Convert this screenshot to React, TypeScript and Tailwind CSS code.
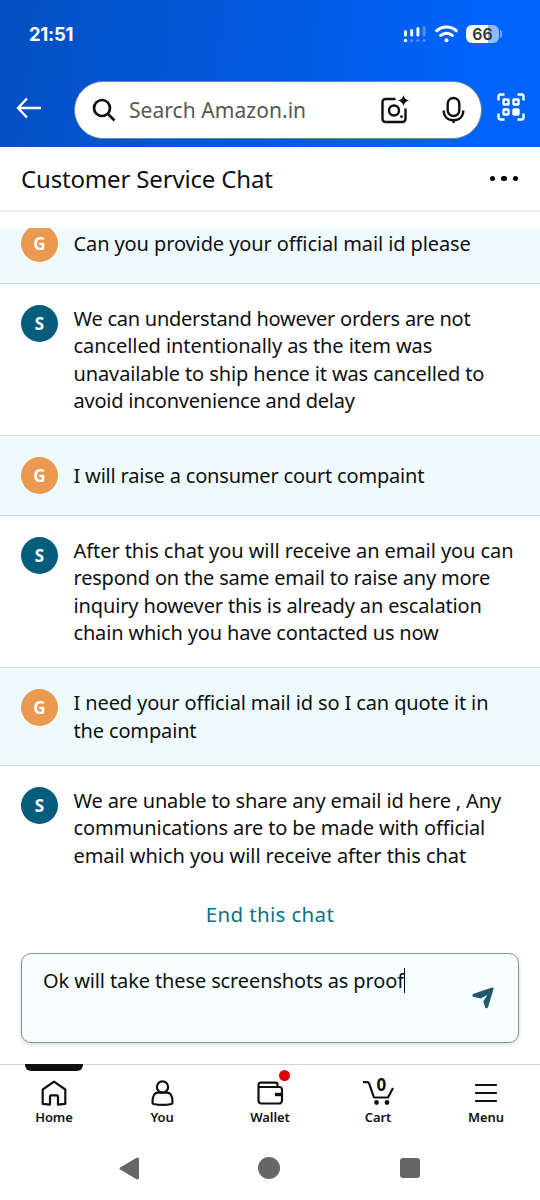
import { useState } from "react";

interface Line {
  text: string;
  tracking: string;
}

interface Message {
  from: "G" | "S";
  lines: Line[];
}

const messages: Message[] = [
  {
    from: "G",
    lines: [
      { text: "Can you provide your official mail id please", tracking: "tracking-[-0.1px]" },
    ],
  },
  {
    from: "S",
    lines: [
      { text: "We can understand however orders are not", tracking: "tracking-[-0.25px]" },
      { text: "cancelled intentionally as the item was", tracking: "tracking-[-0.07px]" },
      { text: "unavailable to ship hence it was cancelled to", tracking: "tracking-[-0.11px]" },
      { text: "avoid inconvenience and delay", tracking: "tracking-[-0.22px]" },
    ],
  },
  {
    from: "G",
    lines: [
      { text: "I will raise a consumer court compaint", tracking: "tracking-[-0.19px]" },
    ],
  },
  {
    from: "S",
    lines: [
      { text: "After this chat you will receive an email you can", tracking: "tracking-[-0.07px]" },
      { text: "respond on the same email to raise any more", tracking: "tracking-[-0.2px]" },
      { text: "inquiry however this is already an escalation", tracking: "tracking-[-0.13px]" },
      { text: "chain which you have contacted us now", tracking: "tracking-[-0.17px]" },
    ],
  },
  {
    from: "G",
    lines: [
      { text: "I need your official mail id so I can quote it in", tracking: "tracking-[-0.12px]" },
      { text: "the compaint", tracking: "tracking-[-0.15px]" },
    ],
  },
  {
    from: "S",
    lines: [
      { text: "We are unable to share any email id here , Any", tracking: "tracking-[-0.15px]" },
      { text: "communications are to be made with official", tracking: "tracking-[-0.12px]" },
      { text: "email which you will receive after this chat", tracking: "tracking-[-0.06px]" },
    ],
  },
];

function StatusBar() {
  return (
    <div className="flex h-[68px] items-center justify-between pl-[29px] pr-[38px]">
      <span className="mt-[2px] font-['Inter'] text-[18.5px] font-bold tracking-[-0.3px] text-white">
        21:51
      </span>
      <div className="flex items-center">
        <svg width="24" height="18" viewBox="0 0 24 18" fill="#fff">
          <rect x="1" y="5" width="3" height="6.5" rx="1.5" />
          <rect x="7.2" y="4" width="3" height="7.5" rx="1.5" />
          <rect x="13.4" y="2" width="3" height="9.5" rx="1.5" />
          <rect x="19.6" y="1" width="3" height="10.5" rx="1.5" opacity=".3" />
          <circle cx="2.5" cy="15.5" r="1.7" />
          <circle cx="8.7" cy="15.5" r="1.6" opacity=".3" />
          <circle cx="14.9" cy="15.5" r="1.6" opacity=".3" />
          <circle cx="21.1" cy="15.5" r="1.6" opacity=".3" />
        </svg>
        <svg className="ml-[8px]" width="23" height="18" viewBox="0 0 23 18" fill="none" stroke="#fff" strokeWidth="3" strokeLinecap="round">
          <path d="M1.8 5.7a14.3 14.3 0 0 1 19.4 0" />
          <path d="M5.7 10.4a8.6 8.6 0 0 1 11.6 0" />
          <circle cx="11.5" cy="15.2" r="2" fill="#fff" stroke="none" />
        </svg>
        <div className="ml-[8px] flex h-[18px] w-[33px] items-center justify-center rounded-[6px] bg-linear-to-r from-white from-67% to-[#8fbbff] to-67% font-['Inter'] text-[16px] font-semibold text-[#333]">
          66
        </div>
        <div className="ml-[1px] h-[8px] w-[2px] rounded-r bg-[#6ea6ff]" />
      </div>
    </div>
  );
}

function Header() {
  return (
    <header className="h-[147px] shrink-0 bg-[linear-gradient(97deg,#034fc0_0%,#0259e0_50%,#0064fc_88%)]">
      <StatusBar />
      <div className="flex items-center pt-[13px]">
        <svg className="mb-[5px] ml-[16px]" width="26" height="22" viewBox="0 0 26 22" fill="none" stroke="#fff" strokeWidth="2.4">
          <path d="M25 11H2.5M11 1.5L2 11l9 9.5" />
        </svg>
        <div className="ml-[32px] flex h-[58px] w-[408px] items-center rounded-full border border-[#6f8a9c] bg-white">
          <svg className="ml-[17px]" width="24" height="24" viewBox="0 0 24 24" fill="none" stroke="#0f1111" strokeWidth="2.7">
            <circle cx="10" cy="10" r="8" />
            <path d="M15.5 15.5l7 7" />
          </svg>
          <span className="mt-[1px] ml-[13px] text-[21px] tracking-[0.05px] text-[#565959]">
            Search Amazon.in
          </span>
          <svg className="mb-[2px] ml-auto" width="29" height="29" viewBox="0 0 29 29" fill="none" stroke="#0f1111" strokeWidth="2.4">
            <path d="M15.5 4H5.5A3 3 0 0 0 2.5 7v17a3 3 0 0 0 3 3h17a3 3 0 0 0 3-3V13.5" />
            <circle cx="14" cy="15.500" r="5" />
            <path d="M23.500 0q1 4.500 5.500 5.500q-4.500 1-5.500 5.500q-1-4.500-5.500-5.500q4.500-1 5.500-5.500z" fill="#0f1111" stroke="none" />
            <circle cx="21.500" cy="21.700" r="1.400" fill="#0f1111" stroke="none" />
          </svg>
          <svg className="mr-[16px] ml-[33px]" width="23" height="28" viewBox="0 0 23 28" fill="none" stroke="#0f1111" strokeWidth="2.4">
            <rect x="5.700" y="2" width="11.600" height="18" rx="5.800" />
            <path d="M1.700 14.500c0 6 4 9.700 9.800 9.700s9.800-3.700 9.800-9.700M11.500 24v3" />
          </svg>
        </div>
        <svg className="mb-[6px] ml-[15px]" width="28" height="28" viewBox="0 0 28 28" fill="none" stroke="#fff" strokeWidth="2.400">
          <path d="M1.500 7.500V3.500a2 2 0 0 1 2-2h4M20.500 1.500h4a2 2 0 0 1 2 2v4M26.500 20.500v4a2 2 0 0 1-2 2h-4M7.500 26.500h-4a2 2 0 0 1-2-2v-4" />
          <rect x="6.500" y="6.500" width="5" height="5" rx=".5" />
          <rect x="16.500" y="6.500" width="5" height="5" rx=".5" />
          <rect x="6.500" y="16.500" width="5" height="5" rx=".5" />
          <rect x="16.500" y="16.500" width="5" height="5" rx=".5" fill="#fff" />
        </svg>
      </div>
    </header>
  );
}

function MessageRow({ from, lines }: Message) {
  return (
    <div
      className={`flex border-b border-[#d5dbdf] px-[21px] py-[21px] last:border-0 ${
        from === "G" ? "bg-[#effaff]" : "bg-white"
      }`}
    >
      <div
        className={`flex size-[37px] shrink-0 items-center justify-center rounded-full text-[17px] font-bold text-white ${
          from === "G" ? "bg-[#eb9850]" : "bg-[#055d7c]"
        }`}
      >
        {from}
      </div>
      <div className="ml-[15.5px] flex flex-col justify-center text-[20px] leading-[27.3px] whitespace-nowrap">
        {lines.map((line) => (
          <p key={line.text} className={line.tracking}>
            {line.text}
          </p>
        ))}
      </div>
    </div>
  );
}

function NavItem({ label, children }: { label: string; children: React.ReactNode }) {
  return (
    <div className="relative flex w-[108px] flex-col items-center pt-[13px]">
      <div className="flex h-[29px] items-center justify-center">{children}</div>
      <span className="text-[13px] leading-[20px] font-semibold tracking-[-0.1px]">{label}</span>
    </div>
  );
}

export default function App() {
  const [draft] = useState("Ok will take these screenshots as proof");

  return (
    <div className="flex h-[1200px] w-[540px] flex-col overflow-hidden bg-white font-['Noto_Sans',sans-serif] text-[#0f1111]">
      <Header />

      <div className="flex h-[65px] shrink-0 items-center justify-between border-b-2 border-[#eceeef] pr-[22px] pl-[21px]">
        <h1 className="text-[24px] tracking-[-0.17px]">Customer Service Chat</h1>
        <div className="flex gap-[6px]">
          <i className="size-[5.5px] rounded-full bg-black" />
          <i className="size-[5.5px] rounded-full bg-black" />
          <i className="size-[5.5px] rounded-full bg-black" />
        </div>
      </div>

      <div className="mt-[16px] h-[662px] shrink-0 overflow-hidden">
        <div className="-mt-[24px]">
          {messages.map((message, index) => (
            <MessageRow key={index} {...message} />
          ))}
        </div>
      </div>

      <div className="mt-[9px] text-center text-[20.5px] leading-[30px] tracking-[0.35px] text-[#0a7385]">
        End this chat
      </div>

      <div className="mx-[21px] mt-[24px] flex h-[90px] shrink-0 items-center justify-between rounded-[10px] border border-[#879596] bg-[#f6feff] pr-[24px] pl-[21px] shadow-[0_2px_4px_rgba(15,17,17,0.15)]">
        <div className="flex h-full items-start pt-[13px] text-[20px] leading-[27px] tracking-[-0.12px] whitespace-nowrap">
          {draft}
          <span className="mt-px h-[25px] w-px bg-black" />
        </div>
        <svg width="22" height="22" viewBox="0 0 22 22" fill="#24596c">
          <path d="M20 .6Q21.800 .3 21.600 2L16 20.200Q15 22.200 13.300 20.700L11.300 14.600L15.300 8L8.500 11.600L1.200 9.800Q-.5 8.400 1 7z" />
        </svg>
      </div>

      <nav className="mt-[21px] flex h-[72px] shrink-0 border-t border-[#cdd4d6]">
        <NavItem label="Home">
          <div className="absolute top-[-1px] left-[25px] h-[7px] w-[58px] rounded-b-[6px] bg-[#0f1111]" />
          <svg width="26" height="26" viewBox="0 0 26 26" fill="none" stroke="#0f1111" strokeWidth="2.2" strokeLinejoin="round">
            <path d="M1.700 9.500L13 1.700l11.300 7.800v14.300l-7.300 .8v-8.200q0-1-1-1h-6q-1 0-1 1v8.200l-7.300-.8z" />
          </svg>
        </NavItem>
        <NavItem label="You">
          <svg width="23" height="26" viewBox="0 0 23 26" fill="none" stroke="#0f1111" strokeWidth="2.2">
            <circle cx="11.500" cy="7" r="5.600" />
            <path d="M6.500 12.700C3 13 1.500 16 1.500 22.500q0 1.200 1.200 1.500q8.800 1.800 17.600 0q1.200-.3 1.200-1.500c0-6.500-1.500-9.500-5-9.800z" />
          </svg>
        </NavItem>
        <NavItem label="Wallet">
          <div className="absolute top-[5px] left-[63px] size-[11px] rounded-full bg-[#e00009]" />
          <svg width="27" height="24" viewBox="0 0 27 24" fill="none" stroke="#0f1111" strokeWidth="2.2">
            <path d="M20.500 6V3.200a1.500 1.500 0 0 0-1.500-1.500H3.500a2 2 0 0 0-2 2V19.500a3 3 0 0 0 3 3h17.500a3 3 0 0 0 3-3V8.500a2.500 2.500 0 0 0-2.500-2.500H2" />
            <path d="M25 13.500h-7" strokeWidth="3.400" />
          </svg>
        </NavItem>
        <NavItem label="Cart">
          <div className="relative h-[27px] w-[31px]">
            <svg width="31" height="27" viewBox="0 0 31 27" fill="none" stroke="#0f1111" strokeWidth="2.200" strokeLinejoin="round">
              <path d="M0 3.200h4.500q1 0 1.500 1L11 18.500h14l5-9.500" />
              <circle cx="13.500" cy="23.500" r="2.400" fill="#0f1111" stroke="none" />
              <circle cx="24" cy="23.500" r="2.400" fill="#0f1111" stroke="none" />
            </svg>
            <span className="absolute top-[-4px] left-[14px] text-[17px] leading-[20px] font-bold">0</span>
          </div>
        </NavItem>
        <NavItem label="Menu">
          <svg width="22" height="20" viewBox="0 0 22 20" stroke="#0f1111" strokeWidth="2.200" strokeLinecap="round">
            <path d="M1 2h20M1 10h20M1 18h20" />
          </svg>
        </NavItem>
      </nav>

      <div className="flex h-[64px] items-center text-[#666]">
        <svg className="ml-[119px]" width="21" height="23" viewBox="0 0 21 23" fill="currentColor">
          <path d="M17.500 .8Q20 0 20 2.300V20.700Q20 23 17.500 22.200L1.200 12.600Q-.2 11.500 1.200 10.400z" />
        </svg>
        <div className="ml-[118px] size-[22px] rounded-full bg-current" />
        <div className="ml-[120px] size-[20px] rounded-[3px] bg-current" />
      </div>
    </div>
  );
}
